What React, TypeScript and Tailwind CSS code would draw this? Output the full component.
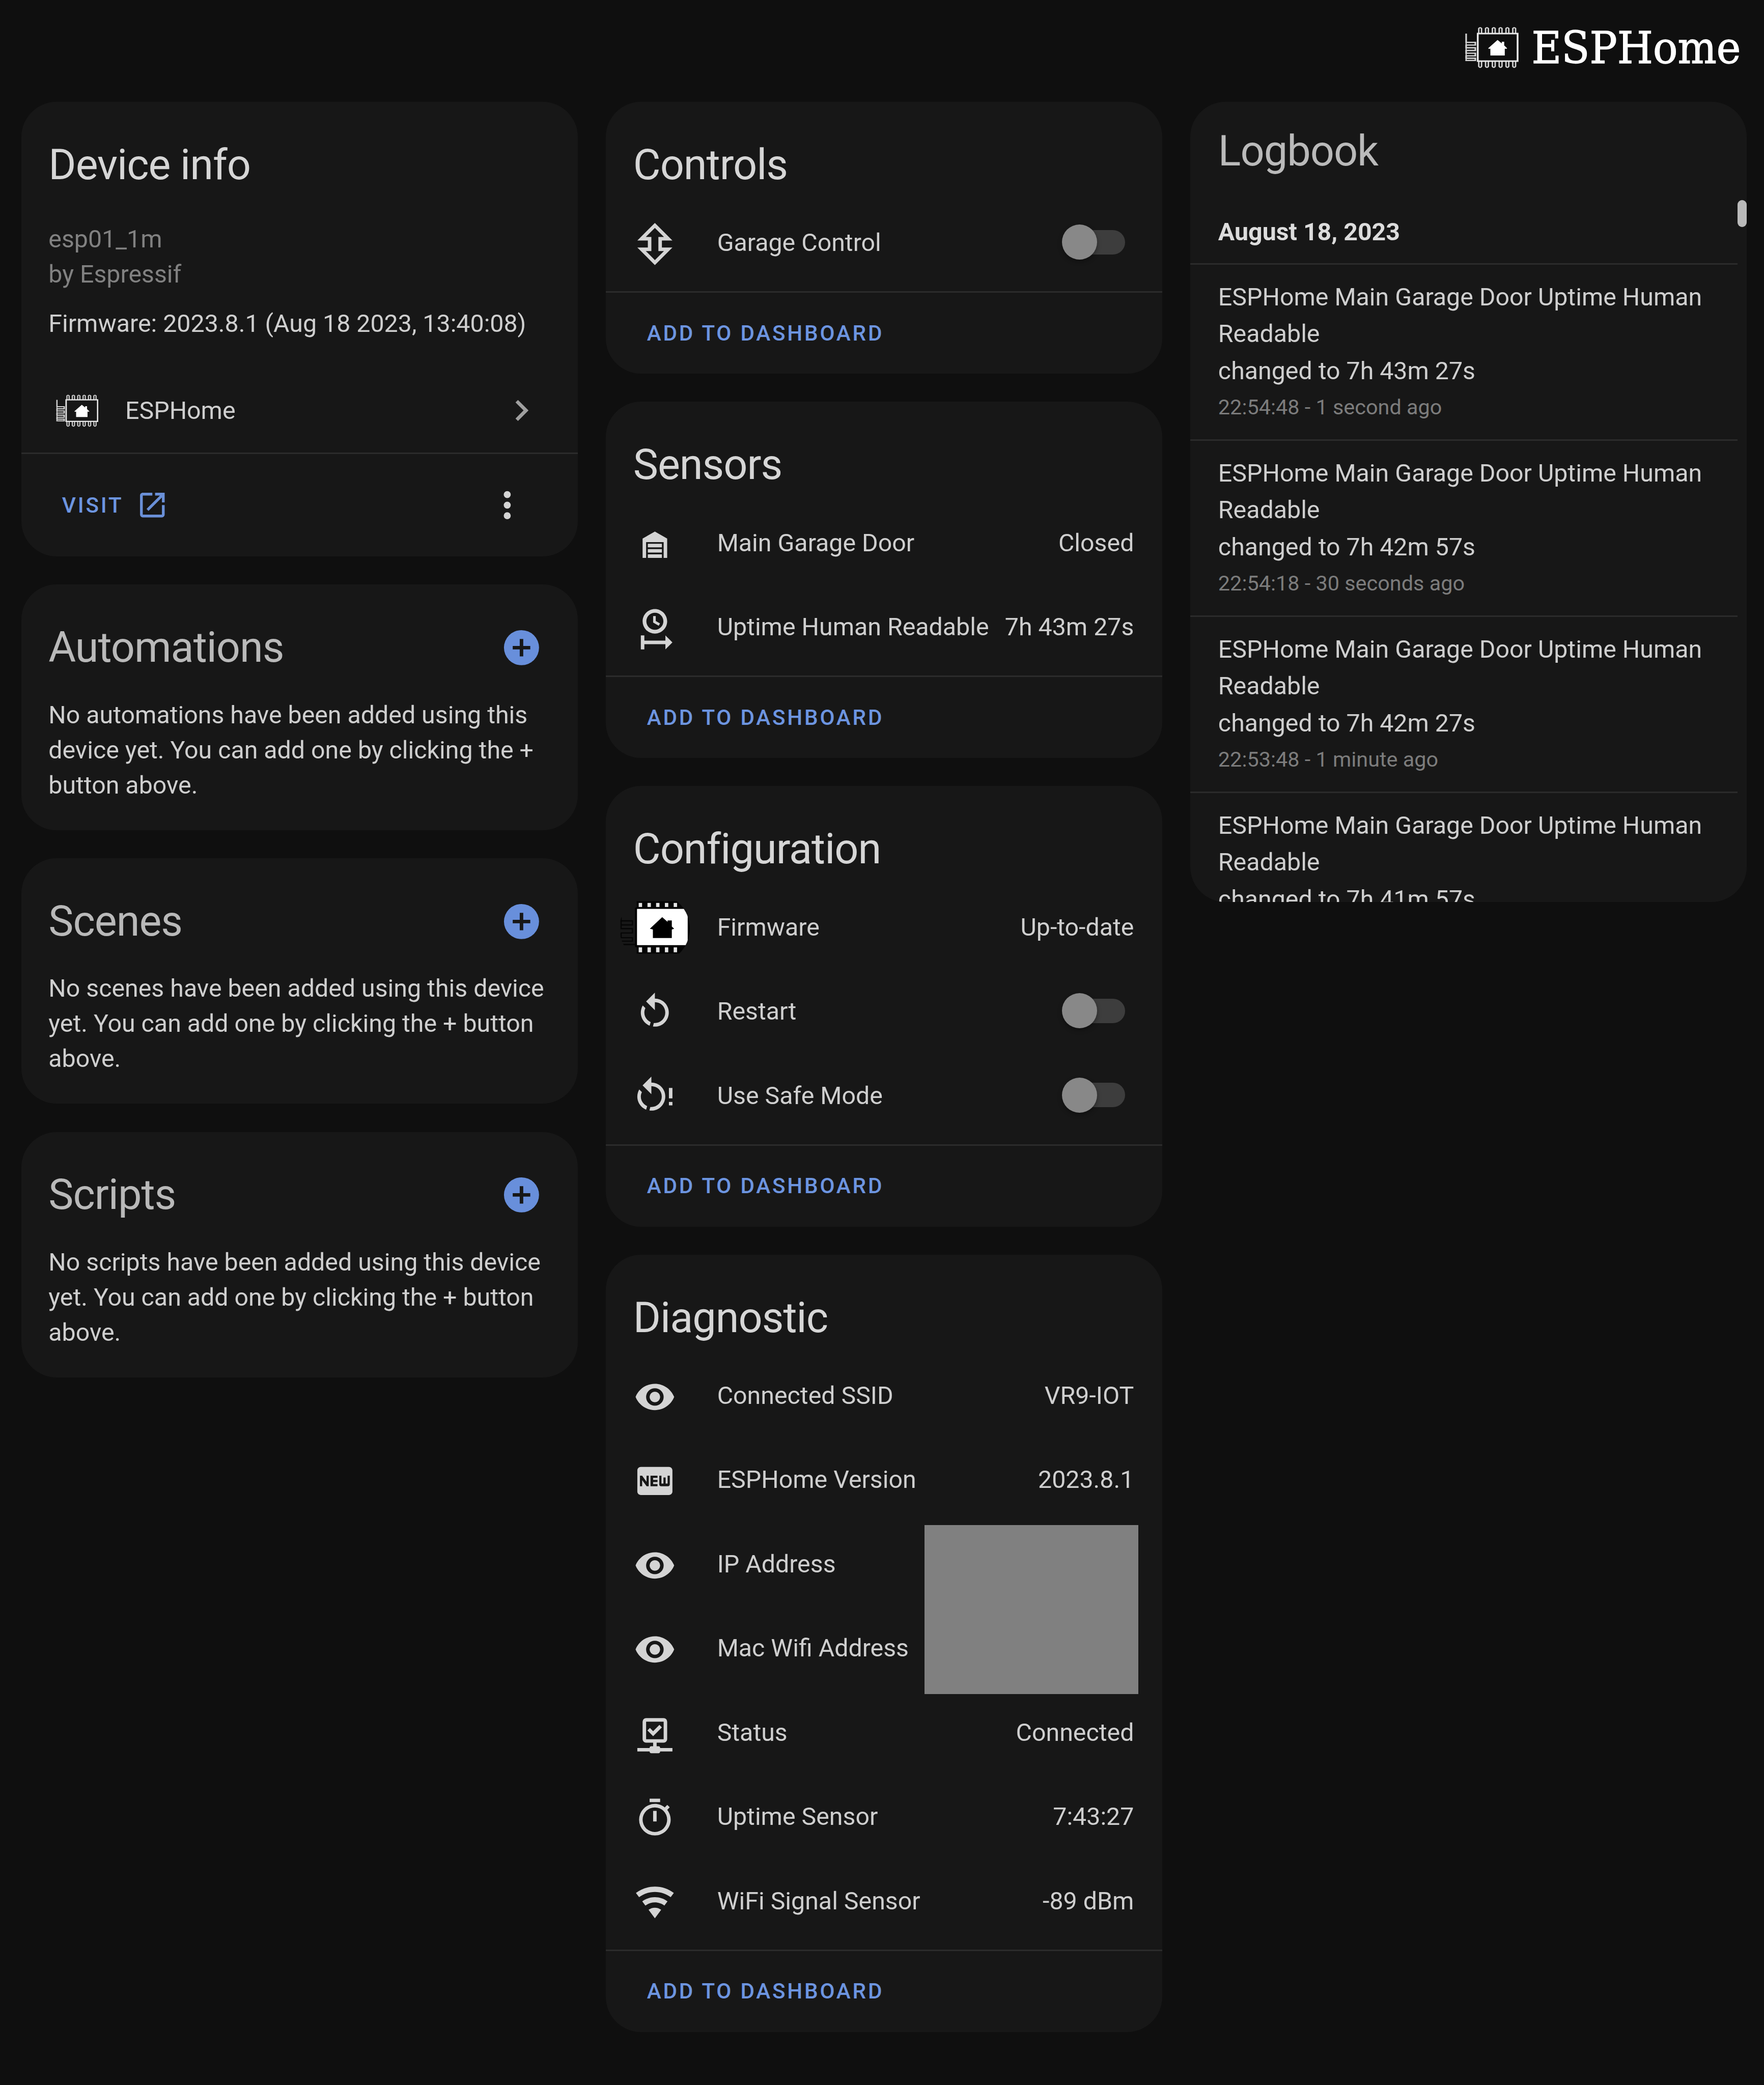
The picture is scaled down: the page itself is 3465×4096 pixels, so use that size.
import type { ReactNode } from "react";
import { MdFiberNew } from "react-icons/md";

/* One spacing unit equals one logical pixel of the dashboard (see --spacing on the root). */

const PATHS = {
  garageControl:
    "M12 0L22 10H16V14H22L12 24L2 14H8V10H2L12 0M12 2.83L6.83 8H10V16H6.83L12 21.17L17.17 16H14V8H17.17L12 2.83Z",
  garage:
    "M19,20H17V11H7V20H5V9L12,5L19,9V20M8,12H16V14H8V12M8,15H16V17H8V15M16,18V20H8V18H16Z",
  clockStart:
    "M12 1C8.14 1 5 4.14 5 8A7 7 0 0 0 12 15C15.86 15 19 11.87 19 8C19 4.14 15.86 1 12 1M12 3.15C14.67 3.15 16.85 5.32 16.85 8S14.67 12.85 12 12.85 7.15 10.68 7.15 8 9.33 3.15 12 3.15M11 5V8.69L14.19 10.53L14.94 9.23L12.5 7.82V5M4 16V24H6V21H18V24L22 20L18 16V19H6V16",
  restart:
    "M12,4C14.1,4 16.1,4.8 17.6,6.3C20.7,9.4 20.7,14.5 17.6,17.6C15.8,19.5 13.3,20.2 10.9,19.9L11.4,17.9C13.1,18.1 14.9,17.5 16.2,16.2C18.5,13.9 18.5,10.1 16.2,7.7C15.1,6.6 13.5,6 12,6V10.6L7,5.6L12,0.6V4M6.3,17.6C3.7,15 3.3,11 5.1,7.9L6.6,9.4C5.5,11.6 5.9,14.4 7.8,16.2C8.3,16.7 8.9,17.1 9.6,17.4L9,19.4C8,19 7.1,18.4 6.3,17.6Z",
  eye: "M12,9A3,3 0 0,0 9,12A3,3 0 0,0 12,15A3,3 0 0,0 15,12A3,3 0 0,0 12,9M12,17A5,5 0 0,1 7,12A5,5 0 0,1 12,7A5,5 0 0,1 17,12A5,5 0 0,1 12,17M12,4.5C7,4.5 2.73,7.61 1,12C2.73,16.39 7,19.5 12,19.5C17,19.5 21.27,16.39 23,12C21.27,7.61 17,4.5 12,4.5Z",
  network:
    "M15,20A1,1 0 0,0 14,19H13V17H17A2,2 0 0,0 19,15V5A2,2 0 0,0 17,3H7A2,2 0 0,0 5,5V15A2,2 0 0,0 7,17H11V19H10A1,1 0 0,0 9,20H2V22H9A1,1 0 0,0 10,23H14A1,1 0 0,0 15,22H22V20H15M7,15V5H17V15H7M11 13.25L7.75 10L9.16 8.59L11 10.41L14.59 6.83L16 8.25Z",
  timer:
    "M12,20A7,7 0 0,1 5,13A7,7 0 0,1 12,6A7,7 0 0,1 19,13A7,7 0 0,1 12,20M19.03,7.39L20.45,5.97C20,5.46 19.55,5 19.04,4.56L17.62,6C16.07,4.74 14.12,4 12,4A9,9 0 0,0 3,13A9,9 0 0,0 12,22C17,22 21,17.97 21,13C21,10.88 20.26,8.93 19.03,7.39M11,14H13V8H11M15,1H9V3H15V1Z",
  wifi: "M12,21L15.6,16.2C14.6,15.45 13.35,15 12,15C10.65,15 9.4,15.45 8.4,16.2L12,21M12,3C7.95,3 4.21,4.34 1.2,6.6L3,9C5.5,7.12 8.62,6 12,6C15.38,6 18.5,7.12 21,9L22.8,6.6C19.79,4.34 16.05,3 12,3M12,9C9.3,9 6.81,9.89 4.8,11.4L6.6,13.8C8.1,12.67 9.97,12 12,12C14.03,12 15.9,12.67 17.4,13.8L19.2,11.4C17.19,9.89 14.7,9 12,9Z",
  openInNew:
    "M14,3V5H17.59L7.76,14.83L9.17,16.24L19,6.41V10H21V3M19,19H5V5H12V3H5C3.89,3 3,3.9 3,5V19A2,2 0 0,0 5,21H19A2,2 0 0,0 21,19V12H19V19Z",
  dots: "M12,16A2,2 0 0,1 14,18A2,2 0 0,1 12,20A2,2 0 0,1 10,18A2,2 0 0,1 12,16M12,10A2,2 0 0,1 14,12A2,2 0 0,1 12,14A2,2 0 0,1 10,12A2,2 0 0,1 12,10M12,4A2,2 0 0,1 14,6A2,2 0 0,1 12,8A2,2 0 0,1 10,6A2,2 0 0,1 12,4Z",
  chevron: "M8.59,16.58L13.17,12L8.59,7.41L10,6L16,12L10,18L8.59,16.58Z",
  plusCircle:
    "M17,13H13V17H11V13H7V11H11V7H13V11H17M12,2A10,10 0 0,0 2,12A10,10 0 0,0 12,22A10,10 0 0,0 22,12A10,10 0 0,0 12,2Z",
};

function Icon({ d, className = "size-24" }: { d: string; className?: string }) {
  return (
    <svg viewBox="0 0 24 24" fill="currentColor" className={className}>
      <path d={d} />
    </svg>
  );
}

function RestartAlert() {
  return (
    <svg viewBox="0 0 24 24" fill="currentColor" className="size-24">
      <path d={PATHS.restart} transform="translate(-2 0)" />
      <path d="M20 7H22V13H20V7M20 15H22V17H20V15Z" />
    </svg>
  );
}

const HOUSE = "M237 176L258 196V186H270V208L284 224V228H273V268H201V228H191V224Z";

/* Outlined ESP chip: antenna, body, pins and the house. */
function ChipDrawing() {
  return (
    <>
      <g fill="none" stroke="#d2d2d2" strokeWidth="8">
        <path d="M80 138V190H126V206H80V222H126V238H80V254H126V270H80V284H126V297H76" />
        <path d="M80 190V298" strokeWidth="6" />
        {[150, 184, 218, 252, 286, 320].map((x) => (
          <path
            key={x}
            strokeWidth="7"
            d={`M${x - 7} 137V108Q${x} 98 ${x + 7} 108V137M${x - 7} 302V332Q${x} 344 ${x + 7} 332V302`}
          />
        ))}
      </g>
      <rect x="138" y="138" width="199" height="163" fill="none" stroke="#e8e8e8" strokeWidth="9" />
      <path d={HOUSE} fill="#fff" />
    </>
  );
}

function HeaderLogo() {
  return (
    <svg
      viewBox="70 90 1385 262"
      preserveAspectRatio="none"
      className="h-[87px] w-[544.6px] overflow-visible"
    >
      <ChipDrawing />
      <text
        x="407"
        y="313"
        fill="#fff"
        stroke="#fff"
        strokeWidth="4"
        fontSize="262"
        textLength="1045"
        lengthAdjust="spacingAndGlyphs"
        className="font-['DejaVu_Serif',serif]"
      >
        ESPHome
      </text>
    </svg>
  );
}

function SmallLogo() {
  return (
    <svg viewBox="74 94 266 252" preserveAspectRatio="none" className="h-19 w-24">
      <ChipDrawing />
    </svg>
  );
}

function FirmwareBadge() {
  return (
    <svg viewBox="66.8 -0.7 415.4 415.4" className="-mx-8 size-40 shrink-0 rounded-full">
      <g fill="none" stroke="#050505" strokeWidth="7">
        <path d="M76 140V208M70 162H143V186H76V208H143V234H76V262H143V282H76V302H160" />
      </g>
      <rect x="168" y="46" width="282" height="310" fill="#050505" />
      <rect x="158" y="82" width="328" height="236" rx="8" fill="#000" />
      {[190, 242, 293, 345, 397].map((x) => (
        <g key={x} fill="#e4e4e4">
          <rect x={x - 10} y="56" width="20" height="24" />
          <rect x={x - 10} y="319" width="20" height="29" />
        </g>
      ))}
      <rect x="170" y="91" width="300" height="215" rx="2" fill="#fff" />
      <path
        d="M319 140L351 168V160H376V196L390 209L376 213V264H264V213L246 209Z"
        fill="#000"
      />
    </svg>
  );
}

function Card({ children, className = "" }: { children: ReactNode; className?: string }) {
  return (
    <section className={`overflow-hidden rounded-[69px] bg-[#171717] ${className}`}>{children}</section>
  );
}

function Toggle() {
  return (
    <span className="mr-5 flex h-20 w-36 items-center">
      <span className="size-20 rounded-full bg-[#888888] shadow-[0_4px_8px_rgba(0,0,0,0.35)]" />
      <span className="-z-10 -ml-10 h-14 w-26 rounded-r-full bg-[#3d3d3d]" />
    </span>
  );
}

type Entity = { icon: ReactNode; name: string; value?: string; toggle?: boolean };

function EntityCard({
  title,
  rows,
  children,
}: {
  title: string;
  rows: Entity[];
  children?: ReactNode;
}) {
  return (
    <Card className="relative z-0">
      <h2 className="flex h-56 items-center px-[54px] pt-16 text-[82.8px] tracking-[-1px] text-[#d6d6d6]">
        {title}
      </h2>
      <div className="pb-4">
        {rows.map((row) => (
          <div key={row.name} className="flex h-48 items-center px-16">
            <span className="mt-2 flex w-24 shrink-0 justify-center text-[#d4d4d4]">{row.icon}</span>
            <span className="ml-[81px] flex-1 pt-[3px] whitespace-nowrap">{row.name}</span>
            {row.toggle ? <Toggle /> : <span className="pt-[3px] whitespace-nowrap">{row.value}</span>}
          </div>
        ))}
      </div>
      <div className="flex h-47 items-center border-t-[3px] border-[#2b2b2b] px-[81px] text-[42.2px] font-medium tracking-[3.77px] text-[#6d95e0]">
        ADD TO DASHBOARD
      </div>
      {children}
    </Card>
  );
}

function AddCard({ title, text }: { title: string; text: string[] }) {
  return (
    <Card className="h-140">
      <div className="flex h-64 items-center justify-between pt-8 pr-20 pl-[53.5px]">
        <h2 className="text-[82.8px] tracking-[-1px] text-[#b9b9b9]">{title}</h2>
        <Icon d={PATHS.plusCircle} className="size-24 text-[#688fdb]" />
      </div>
      <p className="pt-px pl-[53.5px] leading-[69px] whitespace-nowrap">
        {text.map((line) => (
          <span key={line} className="block">
            {line}
          </span>
        ))}
      </p>
    </Card>
  );
}

const eye = <Icon d={PATHS.eye} />;

const LOG: { change: string; time?: string }[] = [
  { change: "changed to 7h 43m 27s", time: "22:54:48 - 1 second ago" },
  { change: "changed to 7h 42m 57s", time: "22:54:18 - 30 seconds ago" },
  { change: "changed to 7h 42m 27s", time: "22:53:48 - 1 minute ago" },
  { change: "changed to 7h 41m 57s" },
];

export default function App() {
  return (
    <div className="h-[4096px] w-[3465px] overflow-hidden bg-[#0f0f0f] font-[Roboto,sans-serif] text-[48.3px] leading-none text-[#cfcfcf] [--spacing:3.4475px]">
      <header className="flex h-[200px] items-start justify-end pt-[50px] pr-[44px]">
        <HeaderLogo />
      </header>
      <main className="grid grid-cols-3 items-start gap-16 pr-[34.5px] pl-[41.8px]">
        <div className="flex flex-col gap-16">
          <Card>
            <h2 className="flex h-68 items-center pt-8 pb-4 pl-[53.5px] text-[82.8px] tracking-[-1px] text-[#d6d6d6]">
              Device info
            </h2>
            <div className="pt-px pl-[53.5px] leading-[69px]">
              <div className="text-[#818181]">
                <p>esp01_1m</p>
                <p>by Espressif</p>
              </div>
              <p className="mt-8 whitespace-nowrap">Firmware: 2023.8.1 (Aug 18 2023, 13:40:08)</p>
            </div>
            <div className="mt-[54px] flex h-48 items-center pr-20 pl-[68.5px]">
              <SmallLogo />
              <span className="ml-[53px] flex-1">ESPHome</span>
              <Icon d={PATHS.chevron} className="size-24 text-[#a0a0a0]" />
            </div>
            <div className="flex h-59 items-center border-t-[3px] border-[#2b2b2b] pr-28 pl-[80px]">
              <span className="text-[42.2px] font-medium tracking-[3.77px] text-[#6d95e0]">VISIT</span>
              <Icon d={PATHS.openInNew} className="ml-[25px] size-[64.5px] text-[#6a90d8]" />
              <Icon d={PATHS.dots} className="ml-auto size-24 text-[#d4d4d4]" />
            </div>
          </Card>
          <AddCard
            title="Automations"
            text={[
              "No automations have been added using this",
              "device yet. You can add one by clicking the +",
              "button above.",
            ]}
          />
          <AddCard
            title="Scenes"
            text={[
              "No scenes have been added using this device",
              "yet. You can add one by clicking the + button",
              "above.",
            ]}
          />
          <AddCard
            title="Scripts"
            text={[
              "No scripts have been added using this device",
              "yet. You can add one by clicking the + button",
              "above.",
            ]}
          />
        </div>

        <div className="flex flex-col gap-16">
          <EntityCard
            title="Controls"
            rows={[{ icon: <Icon d={PATHS.garageControl} />, name: "Garage Control", toggle: true }]}
          />
          <EntityCard
            title="Sensors"
            rows={[
              { icon: <Icon d={PATHS.garage} />, name: "Main Garage Door", value: "Closed" },
              { icon: <Icon d={PATHS.clockStart} />, name: "Uptime Human Readable", value: "7h 43m 27s" },
            ]}
          />
          <EntityCard
            title="Configuration"
            rows={[
              { icon: <FirmwareBadge />, name: "Firmware", value: "Up-to-date" },
              { icon: <Icon d={PATHS.restart} />, name: "Restart", toggle: true },
              { icon: <RestartAlert />, name: "Use Safe Mode", toggle: true },
            ]}
          />
          <EntityCard
            title="Diagnostic"
            rows={[
              { icon: eye, name: "Connected SSID", value: "VR9-IOT" },
              { icon: <MdFiberNew className="size-24" />, name: "ESPHome Version", value: "2023.8.1" },
              { icon: eye, name: "IP Address" },
              { icon: eye, name: "Mac Wifi Address" },
              { icon: <Icon d={PATHS.network} />, name: "Status", value: "Connected" },
              { icon: <Icon d={PATHS.timer} />, name: "Uptime Sensor", value: "7:43:27" },
              { icon: <Icon d={PATHS.wifi} />, name: "WiFi Signal Sensor", value: "-89 dBm" },
            ]}
          >
            {/* Redaction over the two address values */}
            <div className="absolute top-[531px] right-[47px] h-[332px] w-[420px] bg-[#808080]" />
          </EntityCard>
        </div>

        <Card className="flex h-[1572px] flex-col">
          <h2 className="flex h-55 shrink-0 items-center px-16 pt-[5px] text-[82.8px] tracking-[-1px] text-[#bababa]">
            Logbook
          </h2>
          <div className="flex min-h-0 flex-1 items-start">
            <div className="flex-1">
              <p className="flex h-37 items-center px-16 pt-[6px] font-bold text-[#dcdcdc]">August 18, 2023</p>
              {LOG.map((entry) => (
                <div
                  key={entry.change}
                  className="h-[346px] border-t-[3px] border-[#2b2b2b] px-16 pt-8 leading-[72.6px]"
                >
                  <p>ESPHome Main Garage Door Uptime Human Readable</p>
                  <p>{entry.change}</p>
                  {entry.time && (
                    <p className="text-[41.4px] leading-[69px] text-[#7c7c7c]">{entry.time}</p>
                  )}
                </div>
              ))}
            </div>
            <div className="mt-1 h-[53px] w-[18px] rounded-full bg-[#bababa]" />
          </div>
        </Card>
      </main>
    </div>
  );
}
